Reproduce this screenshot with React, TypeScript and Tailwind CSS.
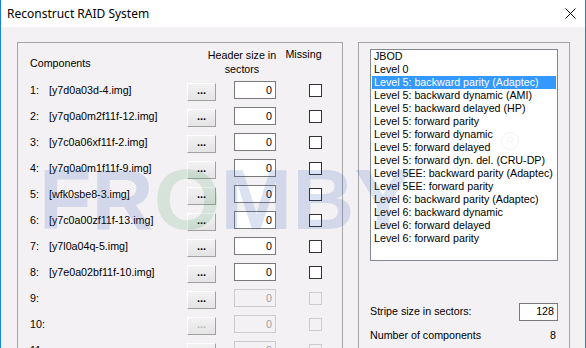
import React from "react";

const files = [
  "[y7d0a03d-4.img]",
  "[y7q0a0m2f11f-12.img]",
  "[y7c0a06xf11f-2.img]",
  "[y7q0a0m1f11f-9.img]",
  "[wfk0sbe8-3.img]",
  "[y7c0a00zf11f-13.img]",
  "[y7l0a04q-5.img]",
  "[y7e0a02bf11f-10.img]",
  "",
  "",
  "",
];

const levels = [
  "JBOD",
  "Level 0",
  "Level 5: backward parity (Adaptec)",
  "Level 5: backward dynamic (AMI)",
  "Level 5: backward delayed (HP)",
  "Level 5: forward parity",
  "Level 5: forward dynamic",
  "Level 5: forward delayed",
  "Level 5: forward dyn. del. (CRU-DP)",
  "Level 5EE: backward parity (Adaptec)",
  "Level 5EE: forward parity",
  "Level 6: backward parity (Adaptec)",
  "Level 6: backward dynamic",
  "Level 6: forward delayed",
  "Level 6: forward parity",
];

function DotsButton({ disabled }: { disabled?: boolean }) {
  return (
    <div
      className={
        "w-[29px] h-[18px] mt-[4px] flex items-center justify-center border border-t-white border-l-white border-r-[#a0a0a0] border-b-[#a0a0a0] bg-[linear-gradient(#f2f2f2,#e4e4e4)] text-[11px] font-bold leading-none pb-[4px] " +
        (disabled ? "text-[#b8b8b8]" : "text-black")
      }
    >
      ...
    </div>
  );
}

function Row({ idx, file }: { idx: number; file: string }) {
  const n = idx + 1;
  const enabled = n <= 8;
  const btnEnabled = n <= 9;
  return (
    <div className="h-[26px] grid grid-cols-[19px_138px_47px_75px_13px] items-center pl-[12px]">
      <div>{n}:</div>
      <div className="whitespace-nowrap">{file}</div>
      <DotsButton disabled={!btnEnabled} />
      <div
        className={
          "w-[42px] h-[18px] border flex items-center justify-end pr-[3px] " +
          (enabled
            ? "border-[#7a7a7a] bg-white text-black"
            : "border-[#cccccc] text-[#a0a0a0]")
        }
      >
        0
      </div>
      <div
        className={
          "w-[13px] h-[13px] border " +
          (enabled ? "border-[#333333] bg-white" : "border-[#cccccc]")
        }
      />
    </div>
  );
}

export default function App() {
  return (
    <div
      className="relative w-[586px] h-[348px] overflow-hidden bg-[#f4f1f4] border-l border-r border-[#1883d7] text-black text-[10.7px] leading-[13px]"
      style={{ fontFamily: '"Liberation Sans", Arial, sans-serif' }}
    >
      {/* title bar */}
      <div className="h-[27px] bg-white flex items-center justify-between pl-[6px] pr-[9px]">
        <div
          className="text-[12px] text-black"
          style={{ fontFamily: '"Noto Sans", "Liberation Sans", sans-serif' }}
        >
          Reconstruct RAID System
        </div>
        <svg width="11" height="11" viewBox="0 0 11 11" className="mt-[-1px]">
          <path d="M0.5 0.5 L10.5 10.5 M10.5 0.5 L0.5 10.5" stroke="#000" strokeWidth="1" />
        </svg>
      </div>

      {/* body */}
      <div className="flex pl-[16px] pt-[15px] gap-[15px]">
        {/* left group */}
        <div className="w-[326px] h-[320px] border border-[#a6a6a6] border-b-0">
          <div className="flex items-start h-[34px] pt-[5px]">
            <div className="w-[183px] pl-[12px] mt-[9px]">Components</div>
            <div className="w-[82px] text-center leading-[14px]">
              Header size in
              <br />
              sectors
            </div>
            <div className="w-[41px] text-center">Missing</div>
          </div>
          {files.map((f, i) => (
            <Row key={i} idx={i} file={f} />
          ))}
        </div>

        {/* right group */}
        <div className="w-[212px] h-[320px] border border-[#a6a6a6] border-b-0 px-[11px] pt-[6px]">
          <div className="h-[212px] border border-[#828790] bg-white px-[1px]">
            {levels.map((l, i) => (
              <div
                key={i}
                className={
                  "h-[13px] leading-[13px] pl-[2px] whitespace-nowrap " +
                  (i === 2 ? "bg-[#3399ff] text-white" : "")
                }
              >
                {l}
              </div>
            ))}
          </div>
          <div className="flex items-center justify-between mt-[41px] h-[19px]">
            <div>Stripe size in sectors:</div>
            <div className="w-[39px] h-[18px] border border-[#7a7a7a] bg-white flex items-center justify-end pr-[3px]">
              128
            </div>
          </div>
          <div className="flex items-center justify-between mt-[8px] pr-[2px]">
            <div>Number of components</div>
            <div>8</div>
          </div>
        </div>
      </div>

      {/* watermark */}
      <div
        className="absolute left-[38px] top-[156px] pointer-events-none font-bold text-[86px] leading-none whitespace-nowrap select-none"
        style={{ fontFamily: '"Liberation Sans", Arial, sans-serif' }}
      >
        <span className="text-[rgba(40,90,180,0.17)]">FR</span>
        <span className="text-[rgba(40,150,80,0.15)]">O</span>
        <span className="text-[rgba(40,90,180,0.17)]">MBY</span>
      </div>
      <div className="absolute left-[500px] top-[132px] w-[18px] h-[18px] rounded-full border border-[rgba(40,90,180,0.07)] text-[rgba(40,90,180,0.08)] text-[11px] flex items-center justify-center pointer-events-none">
        R
      </div>
    </div>
  );
}
